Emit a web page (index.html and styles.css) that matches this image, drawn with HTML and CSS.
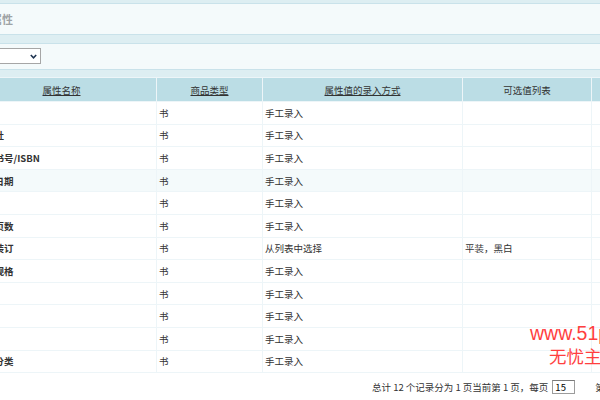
FILE: index.html
```html
<!DOCTYPE html>
<html lang="zh-CN">
<head>
<meta charset="utf-8">
<title>商品属性</title>
<link rel="stylesheet" href="styles.css">
</head>
<body>
<div class="wrap">
  <div class="top-band"></div>
  <h1 class="title">商品属性</h1>
  <div class="gap"></div>
  <div class="form-div">
    <div class="select">
      <span class="select-text">书</span>
      <svg class="chev" width="7" height="5" viewBox="0 0 7 5"><path d="M0.8 0.9 L3.5 3.8 L6.2 0.9" fill="none" stroke="#1d3350" stroke-width="1.5"/></svg>
    </div>
  </div>
  <div class="gap small"></div>
  <table class="list">
    <thead>
      <tr>
        <th class="c1"><a href="#">属性名称</a></th>
        <th class="c2"><a href="#">商品类型</a></th>
        <th class="c3"><a href="#">属性值的录入方式</a></th>
        <th class="c4">可选值列表</th>
        <th class="c5">操作</th>
      </tr>
    </thead>
    <tbody>
      <tr><td class="name">作者</td><td>书</td><td>手工录入</td><td></td><td></td></tr>
      <tr><td class="name">出版社</td><td>书</td><td>手工录入</td><td></td><td></td></tr>
      <tr><td class="name">图书书号/ISBN</td><td>书</td><td>手工录入</td><td></td><td></td></tr>
      <tr class="hover"><td class="name">出版日期</td><td>书</td><td>手工录入</td><td></td><td></td></tr>
      <tr><td class="name">开本</td><td>书</td><td>手工录入</td><td></td><td></td></tr>
      <tr><td class="name">图书页数</td><td>书</td><td>手工录入</td><td></td><td></td></tr>
      <tr><td class="name">图书装订</td><td>书</td><td>从列表中选择</td><td>平装，黑白</td><td></td></tr>
      <tr><td class="name">图书规格</td><td>书</td><td>手工录入</td><td></td><td></td></tr>
      <tr><td class="name">版次</td><td>书</td><td>手工录入</td><td></td><td></td></tr>
      <tr><td class="name">印张</td><td>书</td><td>手工录入</td><td></td><td></td></tr>
      <tr><td class="name">字数</td><td>书</td><td>手工录入</td><td></td><td></td></tr>
      <tr><td class="name">所属分类</td><td>书</td><td>手工录入</td><td></td><td></td></tr>
    </tbody>
  </table>
  <div class="pager">
    <span>总计 12 个记录分为 1 页当前第 1 页，每页</span>
    <input class="page-size" type="text" value="15">
    <span class="sep"></span>
    <span class="nav">第一页 上一页 下一页 最末页</span>
  </div>
</div>
<div class="watermark">
  <div class="wm-url">www.51php.com</div>
  <div class="wm-name">无忧主机</div>
</div>
</body>
</html>
```

FILE: styles.css
```css
html, body {
  margin: 0;
  padding: 0;
  overflow: hidden;
  background: #ddeef2;
}
body {
  width: 600px;
  height: 400px;
  position: relative;
  font-family: "Noto Sans CJK SC", "Noto Sans", sans-serif;
  font-size: 9.5px;
  color: #333;
}
.wrap {
  margin-left: -34px;
  width: 707px;
}
.top-band {
  height: 3px;
  border-bottom: 1px solid #c9e2ea;
}
.title {
  margin: 0;
  height: 30px;
  line-height: 30px;
  padding-left: 3px;
  background: #f4fafb;
  border-bottom: 1px solid #c9e2ea;
  font-size: 11px;
  font-weight: bold;
  color: #9ea3a5;
}
.gap {
  height: 8px;
}
.gap.small {
  height: 7px;
}
.form-div {
  height: 25px;
  background: #f4fafb;
  border-top: 1px solid #c9e2ea;
  border-bottom: 1px solid #c9e2ea;
  display: flex;
  align-items: flex-start;
}
.select {
  margin-top: 4px;
  width: 75px;
  height: 16px;
  box-sizing: border-box;
  background: #fff;
  border: 1px solid #a6a6a6;
  display: flex;
  align-items: center;
  justify-content: space-between;
  padding: 0 3px 0 2px;
}
.select-text {
  font-size: 9.5px;
  color: #000;
}
.chev {
  display: block;
}
.list {
  border-collapse: separate;
  border-spacing: 1px;
  background: #edf5f8;
  table-layout: fixed;
  width: 707px;
}
.list th {
  height: 23px;
  padding: 0;
  background: #bbdde5;
  font-weight: normal;
  color: #333;
  text-align: center;
  white-space: nowrap;
}
.list th a {
  color: #333;
  text-decoration: underline;
}
.c1 { width: 189px; }
.c2 { width: 105px; }
.c3 { width: 199px; }
.c4 { width: 128px; }
.c5 { width: 81px; }
.list td {
  height: 21.6px;
  padding: 0 0 0 2px;
  background: #fff;
  color: #333;
  white-space: nowrap;
  overflow: hidden;
}
.list td.name {
  padding-left: 8.5px;
  font-weight: bold;
}
.list tr.hover td {
  background: #f4fafb;
}
.pager {
  display: flex;
  align-items: center;
  height: 28px;
  padding-left: 406px;
  white-space: nowrap;
  color: #333;
  background: #fff;
}
.page-size {
  width: 23px;
  height: 14px;
  box-sizing: border-box;
  margin: 0 0 0 4px;
  padding: 0 2px;
  border: 1px solid #9c9c9c;
  border-top-color: #7a7a7a;
  font-family: inherit;
  font-size: 9.5px;
  color: #000;
  background: #fff;
}
.sep {
  width: 1px;
  height: 16px;
  margin-left: 13px;
  background: #a9bcc3;
}
.nav {
  margin-left: 7px;
}
.watermark {
  position: absolute;
  left: 530px;
  top: 321px;
  color: #ff3f3f;
  white-space: nowrap;
}
.wm-url {
  font-family: "Liberation Sans", Arial, sans-serif;
  font-size: 19.5px;
  line-height: 24px;
}
.wm-name {
  margin-left: 19px;
  font-family: "Noto Sans CJK SC", sans-serif;
  font-size: 17.5px;
  line-height: 22px;
}
```
